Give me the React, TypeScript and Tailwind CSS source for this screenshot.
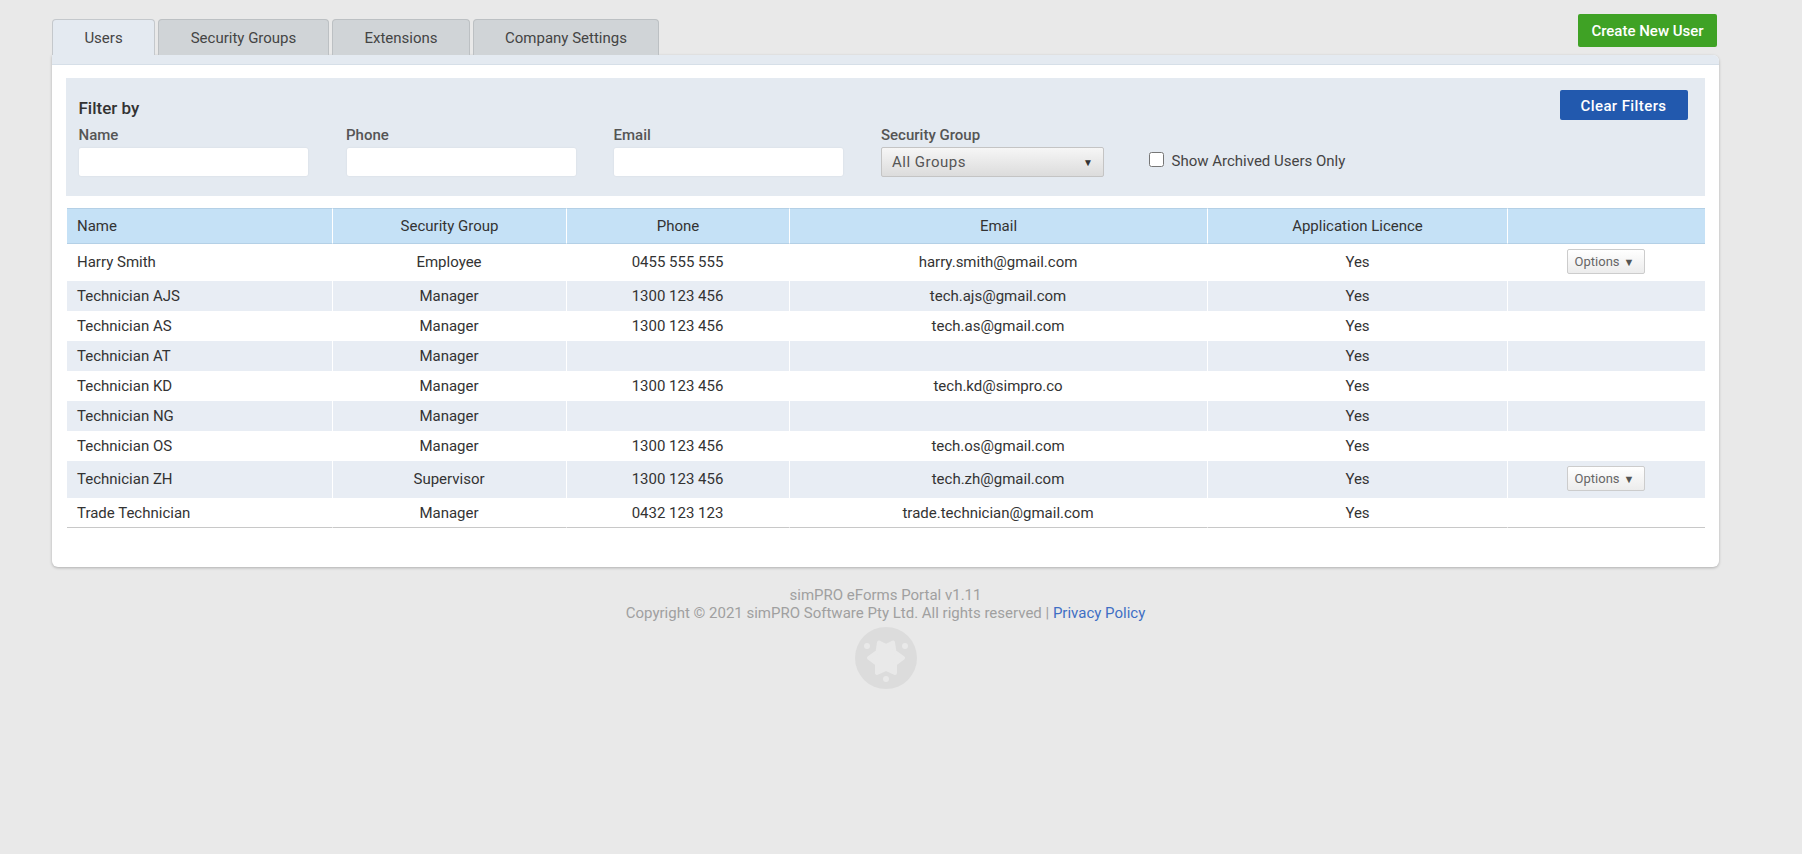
const users = [
  { name: "Harry Smith", group: "Employee", phone: "0455 555 555", email: "harry.smith@gmail.com", options: true },
  { name: "Technician AJS", group: "Manager", phone: "1300 123 456", email: "tech.ajs@gmail.com" },
  { name: "Technician AS", group: "Manager", phone: "1300 123 456", email: "tech.as@gmail.com" },
  { name: "Technician AT", group: "Manager", phone: "", email: "" },
  { name: "Technician KD", group: "Manager", phone: "1300 123 456", email: "tech.kd@simpro.co" },
  { name: "Technician NG", group: "Manager", phone: "", email: "" },
  { name: "Technician OS", group: "Manager", phone: "1300 123 456", email: "tech.os@gmail.com" },
  { name: "Technician ZH", group: "Supervisor", phone: "1300 123 456", email: "tech.zh@gmail.com", options: true },
  { name: "Trade Technician", group: "Manager", phone: "0432 123 123", email: "trade.technician@gmail.com" },
];

const tabs = [
  { label: "Users", width: "w-[103px]", active: true },
  { label: "Security Groups", width: "w-[171px]" },
  { label: "Extensions", width: "w-[138px]" },
  { label: "Company Settings", width: "w-[186px]" },
];

function Field({ label }: { label: string }) {
  return (
    <div className="w-[267.5px]">
      <div className="h-[20px] text-[15px] leading-[20px] font-medium text-[#555]">{label}</div>
      <input className="mt-[3px] ml-[0.5px] block h-[28px] w-[229px] rounded-[2px] bg-white shadow-[0_0_2px_rgba(0,0,0,0.08)]" />
    </div>
  );
}

function Logo() {
  return (
    <svg width="62" height="62" viewBox="-31 -31 62 62" className="mt-[5px]">
      <circle r="31" fill="#dcdcdc" />
      <circle cx="-19" cy="-12" r="3" fill="#e9e9e9" />
      <circle cx="19" cy="-12" r="3" fill="#e9e9e9" />
      <circle cx="0" cy="21" r="3" fill="#e9e9e9" />
      <polygon
        points="-7,-15.5 0,-12 7,-15.5 8.5,-6 17,0 9,6 9,15 0,11 -9,15 -9,6 -17,0 -8.5,-6"
        fill="#e9e9e9"
        stroke="#e9e9e9"
        strokeWidth="4"
        strokeLinejoin="round"
      />
    </svg>
  );
}

function Options() {
  return (
    <button className="mx-auto -mt-[2px] flex h-[25px] w-[78px] -translate-x-[1px] items-center justify-center gap-[4px] rounded-[2px] border border-[#ccc] bg-gradient-to-b from-white to-[#ececec] pr-[2px] text-[13px] text-[#666]">
      Options <span className="translate-y-[2px] text-[11px] text-[#555]">▼</span>
    </button>
  );
}

export default function App() {
  return (
    <div className="min-h-[854px] bg-[#e9e9e9] pl-[52px] font-['Roboto',sans-serif] text-[15px] text-[#333]">
      <div className="w-[1667px]">
        <div className="flex h-[55px] justify-between">
          <div className="mt-[19px] flex h-[36px] gap-[3px]">
            {tabs.map((t) => (
              <div
                key={t.label}
                className={
                  t.active
                    ? "flex w-[103px] items-center justify-center rounded-t-[4px] border border-b-0 border-[#c4c8cc] bg-[#e4eaf1] pt-[1px] text-[#444]"
                    : `flex ${t.width} items-center justify-center rounded-t-[4px] border border-b-0 border-[#bcc0c3] bg-[#d0d4d7] pt-[1px] text-[#444]`
                }
              >
                {t.label}
              </div>
            ))}
          </div>
          <button className="mt-[14px] mr-[2px] h-[33px] w-[139px] rounded-[2px] bg-[#3fa225] pt-[2px] text-[15px] font-medium text-white">
            Create New User
          </button>
        </div>

        <div className="h-[512px] rounded-b-[6px] rounded-tr-[6px] bg-white shadow-[0_1px_3px_rgba(0,0,0,0.25)]">
          <div className="h-[10px] rounded-tr-[6px] border-b border-[#d6dfe8] bg-[#e4eaf1]" />
          <div className="px-[14px] pt-[13px]">
            <div className="relative h-[118px] bg-[#e4eaf1] pl-[12.5px] pt-[20px]">
              <div className="h-[20px] text-[17px] leading-[20px] font-medium text-[#333]">Filter by</div>
              <div className="mt-[7px] flex">
                <Field label="Name" />
                <Field label="Phone" />
                <Field label="Email" />
                <div className="w-[267.5px]">
                  <div className="h-[20px] text-[15px] leading-[20px] font-medium text-[#555]">Security Group</div>
                  <div className="mt-[2px] flex h-[30px] w-[223px] items-center justify-between rounded-[2px] border border-[#c4c4c4] bg-gradient-to-b from-[#f6f6f6] to-[#dcdcdc] pl-[10px] pr-[10px] text-[#555]">
                    <span className="tracking-[0.5px]">All Groups</span>
                    <span className="text-[10px] text-[#333]">▼</span>
                  </div>
                </div>
                <label className="mt-[25px] flex h-[22px] items-center gap-[8px] text-[#444]">
                  <input type="checkbox" className="h-[15px] w-[15px] -translate-y-[2px]" />
                  <span>Show Archived Users Only</span>
                </label>
              </div>
              <button className="absolute right-[17px] top-[12px] h-[30px] w-[128px] rounded-[2px] bg-[#2259ae] pt-[3px] pr-[1px] text-[15px] font-medium tracking-[0.4px] text-white">
                Clear Filters
              </button>
            </div>

            <table className="mx-[1px] mt-[12px] w-[1638px] table-fixed border-separate border-spacing-0">
              <colgroup>
                <col className="w-[266px]" />
                <col className="w-[234px]" />
                <col className="w-[223px]" />
                <col className="w-[418px]" />
                <col className="w-[300px]" />
                <col className="w-[197px]" />
              </colgroup>
              <thead>
                <tr className="h-[36px] bg-[#c5e1f6]">
                  {["Name", "Security Group", "Phone", "Email", "Application Licence", ""].map((h, i) => (
                    <th
                      key={i}
                      className={`border-y border-b-[#b4d0e6] border-t-[#b4d0e6] p-0 font-normal text-[#333] ${
                        i === 0 ? "pl-[10px] text-left" : "text-center"
                      } ${i < 5 ? "border-r border-r-white" : ""}`}
                    >
                      {h}
                    </th>
                  ))}
                </tr>
              </thead>
              <tbody>
                {users.map((u, idx) => {
                  const last = idx === users.length - 1;
                  const cell = `p-0 ${last ? "border-b border-b-[#c8c8c8] pt-[1px]" : ""}`;
                  return (
                    <tr key={u.name} className={`${u.options ? "h-[37px]" : "h-[30px]"} ${idx % 2 === 1 ? "bg-[#e8edf4]" : "bg-white"}`}>
                      <td className={`${cell} border-r border-r-white pl-[10px]`}>{u.name}</td>
                      <td className={`${cell} border-r border-r-white pr-[1px] text-center`}>{u.group}</td>
                      <td className={`${cell} border-r border-r-white pr-[1px] text-center`}>{u.phone}</td>
                      <td className={`${cell} border-r border-r-white pr-[1px] text-center`}>{u.email}</td>
                      <td className={`${cell} border-r border-r-white text-center`}>Yes</td>
                      <td className={cell}>{u.options && <Options />}</td>
                    </tr>
                  );
                })}
              </tbody>
            </table>
          </div>
        </div>

        <div className="mt-[19px] flex flex-col items-center text-[15px] leading-[18px] text-[#a0a0a0]">
          <div>simPRO eForms Portal v1.11</div>
          <div>
            Copyright © 2021 simPRO Software Pty Ltd. All rights reserved | <a className="text-[#3f6fc4]">Privacy Policy</a>
          </div>
          <Logo />
        </div>
      </div>
    </div>
  );
}
